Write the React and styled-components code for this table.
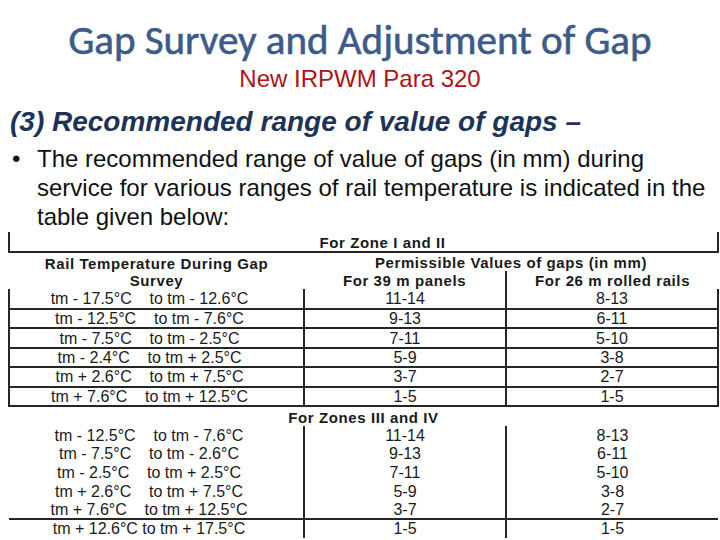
import styled, { createGlobalStyle } from "styled-components";

const zoneOne = [
  ["tm - 17.5°C", "to tm - 12.6°C", "11-14", "8-13"],
  ["tm - 12.5°C", "to tm - 7.6°C", "9-13", "6-11"],
  ["tm - 7.5°C", "to tm - 2.5°C", "7-11", "5-10"],
  ["tm - 2.4°C", "to tm + 2.5°C", "5-9", "3-8"],
  ["tm + 2.6°C", "to tm + 7.5°C", "3-7", "2-7"],
  ["tm + 7.6°C", "to tm + 12.5°C", "1-5", "1-5"],
];

const zoneThree = [
  ["tm - 12.5°C", "to tm - 7.6°C", "11-14", "8-13"],
  ["tm - 7.5°C", "to tm - 2.6°C", "9-13", "6-11"],
  ["tm - 2.5°C", "to tm + 2.5°C", "7-11", "5-10"],
  ["tm + 2.6°C", "to tm + 7.5°C", "5-9", "3-8"],
  ["tm + 7.6°C", "to tm + 12.5°C", "3-7", "2-7"],
  ["tm + 12.6°C", "to tm + 17.5°C", "1-5", "1-5"],
];

const App = () => {
  return (
    <>
      <GlobalStyle />
      <Slide>
        <Title>Gap Survey and Adjustment of Gap</Title>
        <Subtitle>New IRPWM Para 320</Subtitle>
        <Heading>(3) Recommended range of value of gaps –</Heading>
        <Bullets>
          <Bullet>
            The recommended range of value of gaps (in mm) during service for
            various ranges of rail temperature is indicated in the table given
            below:
          </Bullet>
        </Bullets>
        <Table>
          <colgroup>
            <col style={{ width: 295 }} />
            <col style={{ width: 202 }} />
            <col style={{ width: 212 }} />
          </colgroup>
          <tbody>
            <tr>
              <ZoneCell colSpan={3} $boxed $height={19}>
                For Zone I and II
              </ZoneCell>
            </tr>
            <tr>
              <HeadCell rowSpan={2}>
                Rail Temperature During Gap
                <br />
                Survey
              </HeadCell>
              <HeadCell colSpan={2} $height={18}>
                Permissible Values of gaps (in mm)
              </HeadCell>
            </tr>
            <tr>
              <HeadCell $divider $height={18}>
                For 39 m panels
              </HeadCell>
              <HeadCell $height={18}>For 26 m rolled rails</HeadCell>
            </tr>
            {zoneOne.map(([from, to, panels, rolled], i) => (
              <DataRow key={from} $height={i === 0 ? 20 : 19.4}>
                <TempCell $boxed $open={i === 0}>
                  {from}
                  {"    "}
                  {to}
                </TempCell>
                <DataCell $boxed $open={i === 0}>
                  {panels}
                </DataCell>
                <DataCell $boxed $open={i === 0}>
                  {rolled}
                </DataCell>
              </DataRow>
            ))}
            <tr>
              <ZoneCell colSpan={3} $height={19}>
                For Zones III and IV
              </ZoneCell>
            </tr>
            {zoneThree.map(([from, to, panels, rolled], i) => {
              const last = i === zoneThree.length - 1;
              return (
                <DataRow key={from} $height={18.6}>
                  <TempCell $ruled={last}>
                    {from}
                    {last ? " " : "    "}
                    {to}
                  </TempCell>
                  <DataCell $divider $ruled={last}>
                    {panels}
                  </DataCell>
                  <DataCell $ruled={last}>{rolled}</DataCell>
                </DataRow>
              );
            })}
          </tbody>
        </Table>
      </Slide>
    </>
  );
};

const GlobalStyle = createGlobalStyle`
  html, body {
    margin: 0;
    padding: 0;
    background: #ffffff;
  }
`;

const Slide = styled.main`
  width: 720px;
  height: 540px;
  overflow: hidden;
  display: flex;
  flex-direction: column;
  font-family: "Liberation Sans", Arial, sans-serif;
`;

const Title = styled.h1`
  margin: 17px 0 0;
  text-align: center;
  font-family: Carlito, Lato, "Open Sans", sans-serif;
  font-weight: 400;
  font-size: 41px;
  line-height: 46px;
  color: #3d5b88;
  -webkit-text-stroke: 0.6px #3d5b88;
`;

const Subtitle = styled.p`
  margin: 2px 0 0;
  text-align: center;
  font-size: 24px;
  line-height: 28px;
  color: #b01218;
`;

const Heading = styled.h2`
  margin: 13px 0 0 10px;
  font-size: 28px;
  line-height: 32px;
  font-style: italic;
  font-weight: 700;
  color: #1f3358;
`;

const Bullets = styled.ul`
  list-style: none;
  margin: 6px 0 0;
  padding: 0 2px 0 37px;
`;

const Bullet = styled.li`
  position: relative;
  font-size: 24px;
  line-height: 29px;
  color: #111111;

  &::before {
    content: "•";
    position: absolute;
    left: -25px;
    top: 0;
  }
`;

const Table = styled.table`
  margin: 1px 0 0 8px;
  width: 709px;
  border-collapse: collapse;
  table-layout: fixed;
  font-size: 16px;
  color: #1a1a1a;
`;

const line = "2px solid #262626";

const ZoneCell = styled.td`
  height: ${(p) => p.$height}px;
  padding: 0 0 0 ${(p) => (p.$boxed ? 38 : 0)}px;
  text-align: center;
  font-weight: 700;
  font-size: 15px;
  letter-spacing: 0.6px;
  line-height: 17px;
  vertical-align: bottom;
  border-left: ${(p) => (p.$boxed ? line : "none")};
  border-right: ${(p) => (p.$boxed ? line : "none")};
  border-bottom: ${(p) => (p.$boxed ? line : "none")};
`;

const HeadCell = styled.th`
  height: ${(p) => p.$height || 0}px;
  padding: 0;
  text-align: center;
  font-weight: 700;
  font-size: 15px;
  letter-spacing: 0.6px;
  line-height: 17px;
  vertical-align: bottom;
  border-right: ${(p) => (p.$divider ? line : "none")};
`;

const DataRow = styled.tr`
  height: ${(p) => p.$height}px;
`;

const DataCell = styled.td`
  padding: 0;
  text-align: center;
  line-height: 17px;
  white-space: pre;
  border: ${(p) => (p.$boxed ? line : "none")};
  border-top: ${(p) => (p.$open ? "none" : p.$boxed || p.$ruled ? line : "none")};
  border-right: ${(p) => (p.$boxed || p.$divider ? line : "none")};
`;

const TempCell = styled(DataCell)`
  padding-right: 14px;
  border-right: ${line};
`;

export default App;
